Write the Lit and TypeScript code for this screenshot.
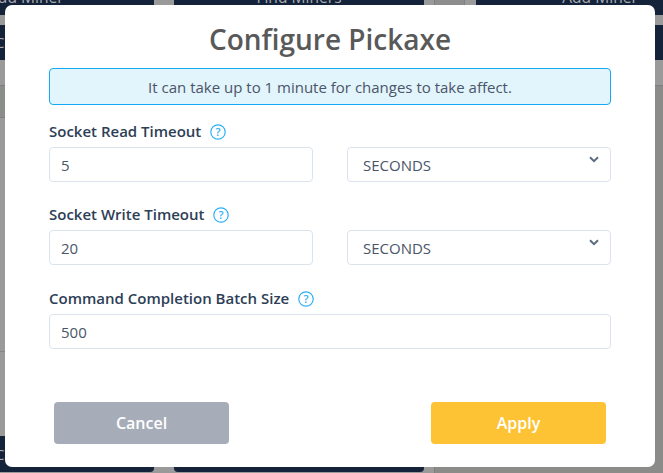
import { LitElement, html, css } from "lit";
import { customElement } from "lit/decorators.js";

const help = html`<svg class="help" viewBox="0 0 16 16" width="16" height="16" aria-hidden="true">
  <circle cx="8" cy="8" r="7.2" fill="none" stroke="#2bb0f7" stroke-width="1.2"></circle>
  <text x="8" y="12" text-anchor="middle" class="q">?</text>
</svg>`;

const chevron = html`<svg class="chev" viewBox="0 0 10 7" width="10" height="7" aria-hidden="true">
  <path d="M1 1.2 L5 5.2 L9 1.2" fill="none" stroke="#5c6b80" stroke-width="2"></path>
</svg>`;

@customElement("app-root")
export class AppRoot extends LitElement {
  static styles = css`
    :host {
      display: block;
      position: relative;
      width: 663px;
      height: 473px;
      overflow: hidden;
      background: #999a99;
      font-family: "Open Sans", "Noto Sans", sans-serif;
    }
    .bg {
      height: 473px;
      display: flex;
      flex-direction: column;
    }
    .bg-top {
      display: grid;
      grid-template-columns: 154px 20px 250px 10px 31px 11px 1fr;
      height: 15px;
      flex: none;
    }
    .bg-btn {
      background: #15233a;
      color: #a7abb3;
      font-size: 15.6px;
      line-height: 1px;
      text-align: center;
      overflow: hidden;
      white-space: nowrap;
    }
    .bg-btn span {
      display: block;
      margin-top: -3px;
    }
    .first { text-align: left; }
    .first span { margin-left: -12px; }
    .last { padding-left: 61px; }
    .cell {
      border-left: 1px solid #7f7f7f;
      border-right: 1px solid #7f7f7f;
      background: #8c8d8c;
    }
    .bg-band {
      margin-top: 10px;
      height: 35px;
      flex: none;
      background: #15233a;
      color: #a7abb3;
      font-size: 15px;
      line-height: 35px;
      overflow: hidden;
    }
    .bg-band span, .bg-foot span {
      display: block;
      margin-left: -5px;
    }
    .bg-pad {
      height: 25px;
      flex: none;
      border-bottom: 1px solid #7f7f7f;
    }
    .bg-main {
      flex: 1;
      display: grid;
      grid-template-columns: 434px 1fr;
      min-height: 0;
    }
    .bg-left {
      display: flex;
      flex-direction: column;
    }
    .bg-right {
      background: #8b8c8a;
      border-left: 1px solid #7f7f7f;
    }
    .shade {
      height: 31px;
      flex: none;
      background: #8b8d8b;
      border-bottom: 1px solid #7f7f7f;
    }
    .plain {
      height: 233px;
      flex: none;
      border-bottom: 1px solid #858585;
    }
    .plain2 { flex: 1; }
    .bg-foot {
      height: 36px;
      flex: none;
      margin-bottom: 1px;
      display: grid;
      grid-template-columns: 154px 20px 250px;
    }
    .bg-foot > div {
      background: #15233a;
      color: #a7abb3;
      font-size: 15px;
      line-height: 36px;
      overflow: hidden;
      border-radius: 0 0 4px 0;
    }
    .bg-foot > div:nth-child(2) {
      background: transparent;
    }
    .bg-foot > div:nth-child(3) {
      border-radius: 0 0 4px 4px;
    }
    .overlay {
      position: absolute;
      left: 5px;
      top: 5px;
      width: 650px;
      height: 462px;
      box-sizing: border-box;
      background: #fff;
      border-radius: 7px;
      padding: 14px 44px 0;
      display: flex;
      flex-direction: column;
    }
    h1 {
      margin: 0;
      font-size: 28px;
      line-height: 40px;
      font-weight: 600;
      text-align: center;
      color: #595959;
    }
    .notice {
      margin-top: 9px;
      height: 37px;
      box-sizing: border-box;
      border: 1px solid #14a9f5;
      border-radius: 4px;
      background: #e2f4fc;
      color: #4a5568;
      font-size: 15px;
      line-height: 36px;
      text-align: center;
    }
    label {
      display: flex;
      align-items: center;
      gap: 9px;
      height: 20px;
      font-size: 15px;
      font-weight: 600;
      color: #2d3e55;
    }
    .help { flex: none; margin-top: 1px; }
    .q {
      font-size: 11px;
      font-weight: 600;
      fill: #2bb0f7;
      font-family: "Open Sans", sans-serif;
    }
    .group { margin-top: 16px; }
    .group + .group { margin-top: 22px; }
    .group + .group + .group { margin-top: 23px; }
    .row {
      margin-top: 6px;
      display: grid;
      grid-template-columns: 264px 264px;
      justify-content: space-between;
    }
    .field {
      height: 35px;
      box-sizing: border-box;
      border: 1px solid #dbe4ec;
      border-radius: 4px;
      background: #fff;
      padding: 0 11px;
      font-size: 15px;
      line-height: 34px;
      color: #4a5568;
    }
    .select {
      position: relative;
      padding-left: 15px;
    }
    .chev {
      position: absolute;
      right: 11px;
      top: 8px;
    }
    .wide { grid-template-columns: 1fr; }
    .actions {
      margin-top: 53px;
      padding: 0 5px;
      display: flex;
      justify-content: space-between;
    }
    button {
      width: 175px;
      height: 42px;
      border: 0;
      border-radius: 4px;
      color: #fff;
      font: 600 16px "Open Sans", sans-serif;
      padding: 0;
    }
    .cancel { background: #a6adb9; }
    .apply { background: #fdc335; }
  `;

  render() {
    return html`
      <div class="bg">
        <div class="bg-top">
          <div class="bg-btn first"><span>Add Miner</span></div>
          <div></div>
          <div class="bg-btn"><span>Find Miners</span></div>
          <div></div>
          <div class="cell"></div>
          <div></div>
          <div class="bg-btn last"><span>Add Miner</span></div>
        </div>
        <div class="bg-band"><span>Ca</span></div>
        <div class="bg-pad"></div>
        <div class="bg-main">
          <div class="bg-left">
            <div class="shade"></div>
            <div class="plain"></div>
            <div class="plain2"></div>
            <div class="bg-foot">
              <div><span>Ca</span></div>
              <div></div>
              <div></div>
            </div>
          </div>
          <div class="bg-right"></div>
        </div>
      </div>
      <div class="overlay">
        <h1>Configure Pickaxe</h1>
        <div class="notice">It can take up to 1 minute for changes to take affect.</div>
        <div class="group">
          <label>Socket Read Timeout ${help}</label>
          <div class="row">
            <div class="field">5</div>
            <div class="field select">SECONDS${chevron}</div>
          </div>
        </div>
        <div class="group">
          <label>Socket Write Timeout ${help}</label>
          <div class="row">
            <div class="field">20</div>
            <div class="field select">SECONDS${chevron}</div>
          </div>
        </div>
        <div class="group">
          <label>Command Completion Batch Size ${help}</label>
          <div class="row wide">
            <div class="field">500</div>
          </div>
        </div>
        <div class="actions">
          <button class="cancel">Cancel</button>
          <button class="apply">Apply</button>
        </div>
      </div>
    `;
  }
}
